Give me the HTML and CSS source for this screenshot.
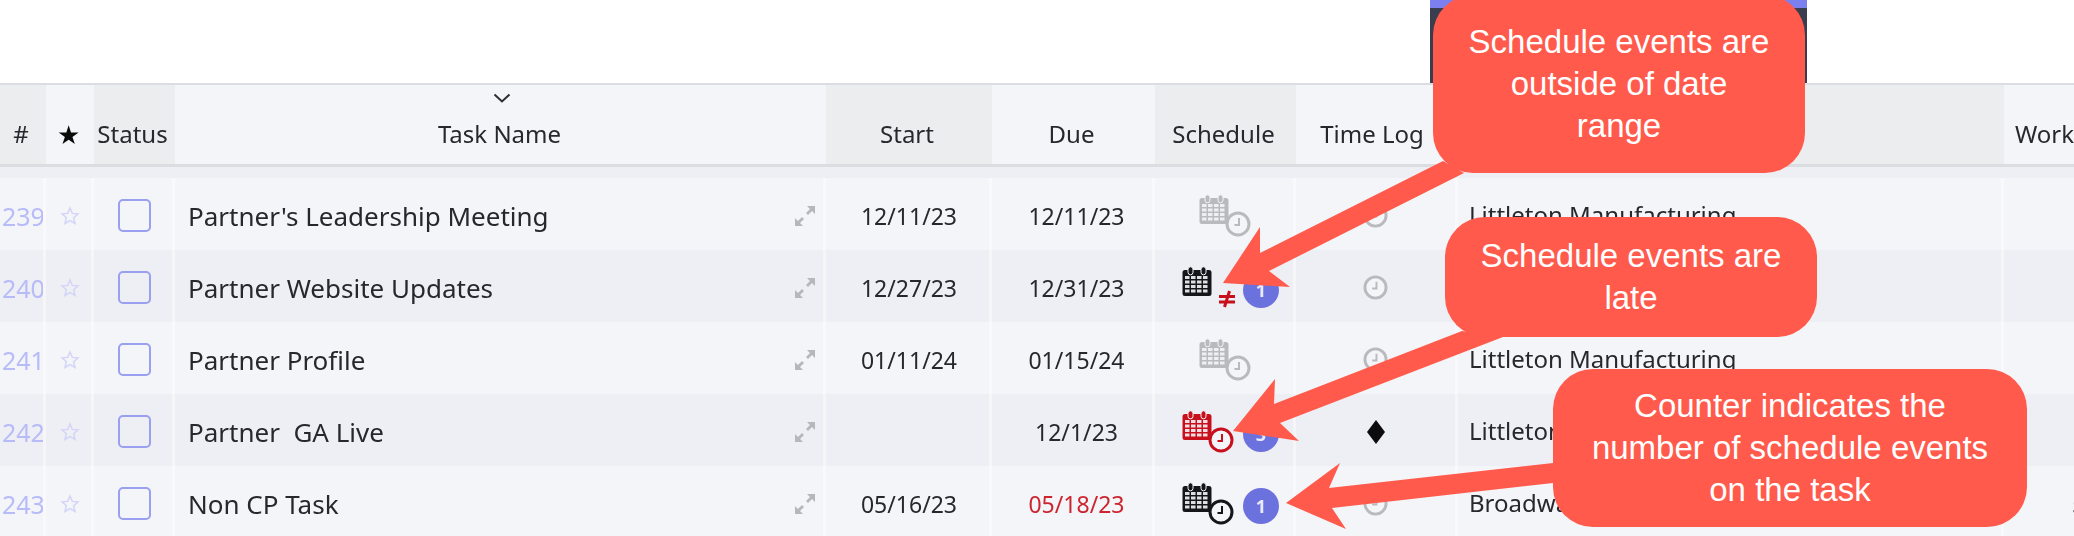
FILE: index.html
```html
<!DOCTYPE html>
<html lang="en">
<head>
    <meta charset="UTF-8">
    <title>Schedule column notes</title>
    <link rel="stylesheet" href="styles.css">
</head>
<body>
    <svg class="defs" width="0" height="0">
        <symbol id="calendar" viewBox="0 0 30 30">
            <path d="M3 4h24a2.500 2.500 0 0 1 2.500 2.500v21a2.500 2.500 0 0 1-2.500 2.500h-24a2.500 2.500 0 0 1-2.500-2.500v-21a2.500 2.500 0 0 1 2.500-2.500z" fill="currentColor"/>
            <rect x="6" y="0.800" width="5" height="8" rx="2.500" fill="currentColor" stroke="#f4f5f8" stroke-width="1"/>
            <rect x="19" y="0.800" width="5" height="8" rx="2.500" fill="currentColor" stroke="#f4f5f8" stroke-width="1"/>
            <path d="M3 11.500h24M3 16h24M3 20.500h24M3 25h24" stroke="#f4f5f8" stroke-width="3" stroke-dasharray="4.500 1.500" opacity="0.9"/>
        </symbol>
        <symbol id="clock" viewBox="0 0 26 26">
            <circle cx="13" cy="13" r="11" fill="#f4f5f8" stroke="currentColor" stroke-width="3"/>
            <path d="M14 7v7h-4.500" fill="none" stroke="currentColor" stroke-width="2"/>
        </symbol>
        <symbol id="expand" viewBox="0 0 22 22">
            <path d="M13 1h8v8l-3-3-4 4-2-2 4-4zM9 21h-8v-8l3 3 4-4 2 2-4 4z" fill="currentColor"/>
        </symbol>
        <symbol id="star" viewBox="0 0 20 20">
            <path d="M10 2l2.300 5.400 5.700.5-4.300 3.800 1.300 5.800-5-3-5 3 1.300-5.800-4.300-3.800 5.700-.5z" fill="none" stroke="currentColor" stroke-width="1.500"/>
        </symbol>
    </svg>

    <div class="page">
        <div class="toolbar">
            <div class="toolbar-box"></div>
        </div>

        <div class="grid-head">
            <div class="hcell shade">#</div>
            <div class="hcell hstar">★</div>
            <div class="hcell shade">Status</div>
            <div class="hcell htask">
                <svg class="chevron" width="18" height="10" viewBox="0 0 18 10"><path d="M1.500 1.500l7.500 7 7.500-7" fill="none" stroke="#2b2d33" stroke-width="2"/></svg>
                Task Name
            </div>
            <div class="hcell shade">Start</div>
            <div class="hcell">Due</div>
            <div class="hcell shade">Schedule</div>
            <div class="hcell hlog">Time Log</div>
            <div class="hcell shade"></div>
            <div class="hcell hwork">Work</div>
        </div>
        <div class="grid-strip"></div>

        <div class="row">
            <div class="cell num">239</div>
            <div class="cell fav"><svg class="star"><use href="#star"/></svg></div>
            <div class="cell status"><span class="box"></span></div>
            <div class="cell task"><span>Partner's Leadership Meeting</span><svg class="expand"><use href="#expand"/></svg></div>
            <div class="cell date">12/11/23</div>
            <div class="cell date">12/11/23</div>
            <div class="cell sched">
                <div class="sched-icon grey"><svg class="cal"><use href="#calendar"/></svg><svg class="clk"><use href="#clock"/></svg></div>
            </div>
            <div class="cell log"><svg class="clk-log"><use href="#clock"/></svg></div>
            <div class="cell client">Littleton Manufacturing</div>
            <div class="cell"></div>
        </div>

        <div class="row alt">
            <div class="cell num">240</div>
            <div class="cell fav"><svg class="star"><use href="#star"/></svg></div>
            <div class="cell status"><span class="box"></span></div>
            <div class="cell task"><span>Partner Website Updates</span><svg class="expand"><use href="#expand"/></svg></div>
            <div class="cell date">12/27/23</div>
            <div class="cell date">12/31/23</div>
            <div class="cell sched has-count">
                <div class="sched-icon black"><svg class="cal"><use href="#calendar"/></svg><svg class="neq" width="18" height="18" viewBox="0 0 18 18"><path d="M1 6.500h16M1 12h16M11.500 1l-5 16" fill="none" stroke="#c8101c" stroke-width="3"/></svg></div>
                <span class="count">1</span>
            </div>
            <div class="cell log"><svg class="clk-log"><use href="#clock"/></svg></div>
            <div class="cell client"></div>
            <div class="cell"></div>
        </div>

        <div class="row">
            <div class="cell num">241</div>
            <div class="cell fav"><svg class="star"><use href="#star"/></svg></div>
            <div class="cell status"><span class="box"></span></div>
            <div class="cell task"><span>Partner Profile</span><svg class="expand"><use href="#expand"/></svg></div>
            <div class="cell date">01/11/24</div>
            <div class="cell date">01/15/24</div>
            <div class="cell sched">
                <div class="sched-icon grey"><svg class="cal"><use href="#calendar"/></svg><svg class="clk"><use href="#clock"/></svg></div>
            </div>
            <div class="cell log"><svg class="clk-log"><use href="#clock"/></svg></div>
            <div class="cell client">Littleton Manufacturing</div>
            <div class="cell"></div>
        </div>

        <div class="row alt">
            <div class="cell num">242</div>
            <div class="cell fav"><svg class="star"><use href="#star"/></svg></div>
            <div class="cell status"><span class="box"></span></div>
            <div class="cell task"><span>Partner&nbsp; GA Live</span><svg class="expand"><use href="#expand"/></svg></div>
            <div class="cell date"></div>
            <div class="cell date">12/1/23</div>
            <div class="cell sched has-count">
                <div class="sched-icon red"><svg class="cal"><use href="#calendar"/></svg><svg class="clk"><use href="#clock"/></svg></div>
                <span class="count">3</span>
            </div>
            <div class="cell log"><svg class="diamond" width="18" height="24" viewBox="0 0 18 24"><path d="M9 0l9 12-9 12-9-12z" fill="#0c0c0e"/></svg></div>
            <div class="cell client">Littleton Manufacturing</div>
            <div class="cell"></div>
        </div>

        <div class="row">
            <div class="cell num">243</div>
            <div class="cell fav"><svg class="star"><use href="#star"/></svg></div>
            <div class="cell status"><span class="box"></span></div>
            <div class="cell task"><span>Non CP Task</span><svg class="expand"><use href="#expand"/></svg></div>
            <div class="cell date">05/16/23</div>
            <div class="cell date late">05/18/23</div>
            <div class="cell sched has-count">
                <div class="sched-icon black"><svg class="cal"><use href="#calendar"/></svg><svg class="clk"><use href="#clock"/></svg></div>
                <span class="count">1</span>
            </div>
            <div class="cell log"><svg class="clk-log"><use href="#clock"/></svg></div>
            <div class="cell client">Broadway</div>
            <div class="cell work">5</div>
        </div>

        <!-- annotations drawn on top of the grid -->
        <svg class="arrows" width="2074" height="536" viewBox="0 0 2074 536">
            <path d="M1223 283L1260 227L1260 253L1443 161L1464 173L1269 271L1290 287z"/>
            <path d="M1233 431L1275 379L1274 404L1462 331L1503 337L1280 423L1299 441z"/>
            <path d="M1286 503L1340 463L1329 488L1553 463L1553 483L1332 508L1346 529z"/>
        </svg>
        <div class="note note-range">Schedule events are<br>outside of date<br>range</div>
        <div class="note note-late">Schedule events are<br>late</div>
        <div class="note note-count">Counter indicates the<br>number of schedule events<br>on the task</div>
    </div>
</body>
</html>
```

FILE: styles.css
```css
:root {
    --cor-linha: #f4f5f8;
    --cor-linha-alt: #eeeff4;
    --cor-sombra: #ecedef;
    --cor-nota: #ff5a4b;
    --cor-azul: #6b72de;
    --colunas: 46px 48px 81px 651px 166px 163px 141px 162px 546px 1fr;
}
* { box-sizing: border-box; margin: 0; padding: 0; }
html, body { height: 100%; overflow: hidden; }
body {
    background-color: #fff;
    color: #26282d;
    font-family: 'Noto Sans', 'Open Sans', sans-serif;
}
.defs { display: block; height: 0; }
.page { position: relative; width: 2074px; height: 536px; overflow: hidden; }

.toolbar { height: 85px; padding-left: 1430px; border-bottom: 2px solid #dcdce2; }
.toolbar-box { width: 377px; height: 83px; background-color: #3a3d4e; border-top: 8px solid #7b80ee; }

.grid-head { display: grid; grid-template-columns: var(--colunas); height: 82px; border-bottom: 3px solid #dcdde0; background-color: var(--cor-linha); filter: blur(0.6px); }
.hcell { display: flex; align-items: flex-end; justify-content: center; padding-bottom: 14px; padding-right: 4px; font-size: 24px; line-height: 32px; white-space: nowrap; }
.shade { background-color: var(--cor-sombra); }
.hstar { font-size: 26px; color: #0a0a0a; background-color: var(--cor-linha); }
.htask { position: relative; padding-right: 2px; }
.chevron { position: absolute; top: 8px; left: 318px; }
.hlog { padding-right: 10px; }
.hwork { justify-content: flex-start; padding-left: 11px; }

.grid-strip { height: 11px; background-color: var(--cor-linha-alt); }

.row { display: grid; grid-template-columns: var(--colunas); height: 72px; background-color: var(--cor-linha); filter: blur(0.6px); }
.row.alt { background-color: var(--cor-linha-alt); }
.cell { display: flex; align-items: center; padding-top: 3px; border-right: 3px solid rgba(255, 255, 255, 0.45); font-size: 23px; white-space: nowrap; overflow: hidden; }
.cell:last-child { border-right: none; }
.num { color: #b7bbf8; padding-left: 2px; font-size: 25px; }
.fav { justify-content: center; padding-left: 3px; }
.star { width: 20px; height: 20px; color: #d2d5f8; }
.status { justify-content: center; padding-left: 3px; }
.box { width: 33px; height: 33px; border: 2px solid #9a9ff0; border-radius: 5px; }
.task { justify-content: space-between; padding-left: 13px; padding-right: 7px; font-size: 26px; }
.expand { width: 22px; height: 22px; color: #b5b7ba; }
.date { justify-content: center; padding-left: 3px; }
.date + .date { padding-left: 9px; }
.late { color: #cc2530; }

.sched { justify-content: center; padding-left: 3px; }
.sched.has-count { padding-left: 13px; gap: 7px; }
.sched-icon { position: relative; width: 54px; height: 44px; flex: none; }
.grey { color: #b9babd; }
.black { color: #15161a; }
.red { color: #c8101c; }
.cal { position: absolute; left: 0; top: 0; width: 30px; height: 30px; }
.clk { position: absolute; left: 26px; top: 17px; width: 26px; height: 26px; }
.neq { position: absolute; left: 36px; top: 24px; }
.count {
    display: flex; align-items: center; justify-content: center; flex: none;
    width: 36px; height: 36px; margin-top: 4px; border-radius: 50%;
    background-color: var(--cor-azul); color: #e8eafc; font-size: 18px; font-weight: 700;
}
.log { justify-content: center; }
.clk-log { width: 25px; height: 25px; color: #b9babd; }
.client { padding-left: 11px; padding-top: 0; font-size: 24px; }
.work { padding-left: 68px; }

.arrows { position: absolute; left: 0; top: 0; fill: var(--cor-nota); }
.note {
    position: absolute; display: flex; align-items: center; justify-content: center;
    background-color: var(--cor-nota); border-radius: 40px;
    color: #fff; font-family: 'Liberation Sans', Arial, sans-serif; font-size: 33px; line-height: 42px; text-align: center;
}
.note-range { left: 1433px; top: -5px; width: 372px; height: 178px; }
.note-late { left: 1445px; top: 217px; width: 372px; height: 120px; }
.note-count { left: 1553px; top: 369px; width: 474px; height: 158px; }
```
